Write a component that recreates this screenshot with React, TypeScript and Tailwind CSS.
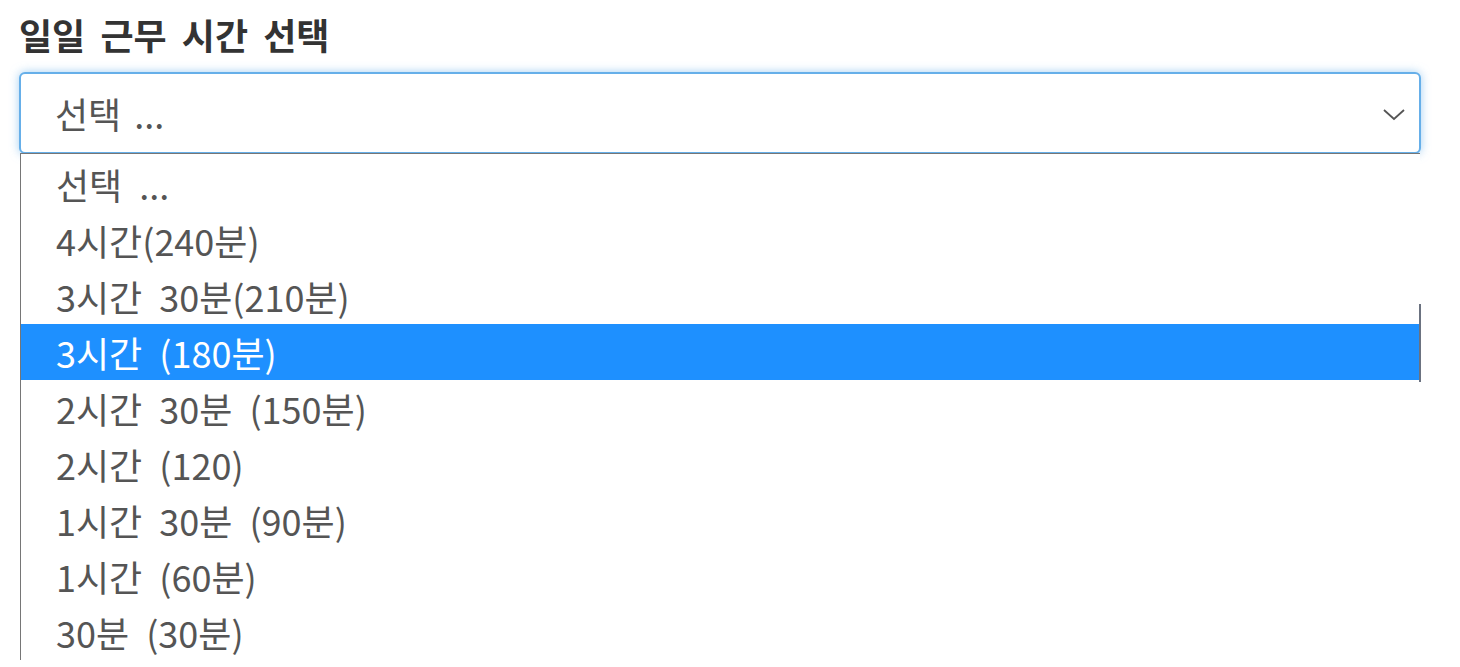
const OPTIONS = [
  "선택 ...",
  "4시간(240분)",
  "3시간 30분(210분)",
  "3시간 (180분)",
  "2시간 30분 (150분)",
  "2시간 (120)",
  "1시간 30분 (90분)",
  "1시간 (60분)",
  "30분 (30분)",
]

const font = { fontFamily: '"Noto Sans CJK KR", "Noto Sans", sans-serif' }

export default function App() {
  const selected = 3

  return (
    <main className="relative h-[667px] w-[1460px] overflow-hidden bg-white [word-spacing:7px]" style={font}>
      <div className="px-[19px] pt-[8px]">
        {/* 라벨 */}
        <h1 className="text-[36px] font-bold leading-[52px] text-[#333]">일일 근무 시간 선택</h1>

        {/* 셀렉트 박스 */}
        <div className="mt-[12px] flex h-[82px] w-[1402px] items-center justify-between rounded-[6px] border-2 border-[#66afe9] bg-white pl-[34px] pr-[13px] shadow-[0_0_10px_rgba(102,175,233,0.6)]">
          <span className="text-[36px] leading-[52px] text-[#555] [word-spacing:5px]">선택 ...</span>
          <svg width="24" height="16" viewBox="0 0 24 16" fill="none" stroke="#555" strokeWidth="1.8">
            <path d="M2 5 L12 14 L22 5" />
          </svg>
        </div>
      </div>

      {/* 드롭다운 목록 */}
      <div className="absolute left-[20px] top-[153px] w-[1400px] border-l border-t border-[#767676] bg-white">
        <div className="pt-[2px]">
          {OPTIONS.map((o, i) => (
            <div
              key={o}
              className={`flex h-[56px] items-center pl-[35px] text-[36px] [word-spacing:9px] ${
                i === selected ? "bg-[#1e90ff] text-white" : "text-[#555]"
              } ${i === 0 ? "[word-spacing:5px]" : ""}`}
            >
              {o}
            </div>
          ))}
        </div>
      </div>
      <div className="absolute left-[1419px] top-[304px] h-[78px] w-[2px] bg-[#6b7280]" />
    </main>
  )
}
